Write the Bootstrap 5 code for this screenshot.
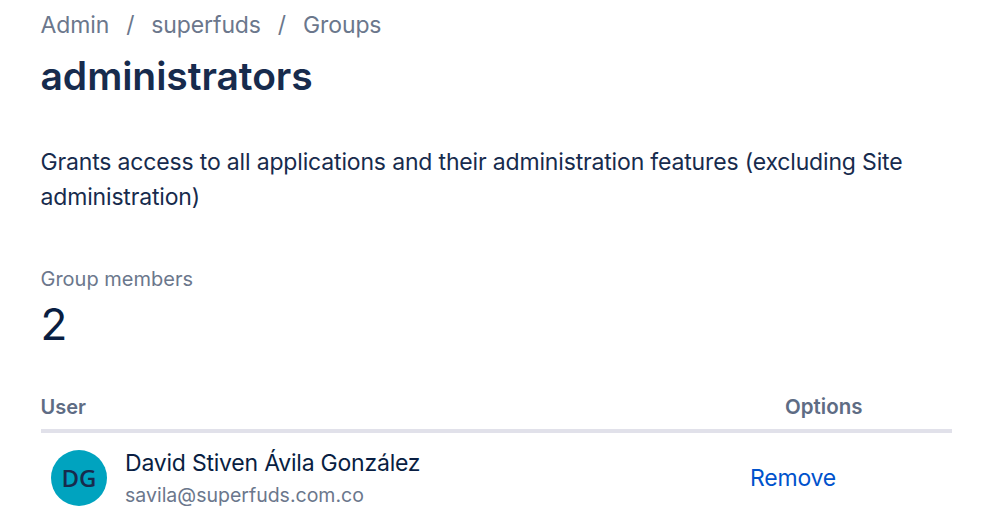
<!DOCTYPE html>
<html lang="en">
<head>
  <meta charset="UTF-8" />
  <meta name="viewport" content="width=device-width, initial-scale=1.0"/>
  <title>administrators</title>
  <link href="https://cdn.jsdelivr.net/npm/bootstrap@5.3.0/dist/css/bootstrap.min.css" rel="stylesheet">
  <style>
    body { font-family: Inter, "Liberation Sans", sans-serif; color: #172b4d; background: #fff; overflow: hidden; }
    .page-wrap { padding: 9px 47px 0 40.5px; }
    .crumbs { font-size: 23px; line-height: 32px; color: #6b778c; gap: 17px; letter-spacing: -.12px; }
    .page-title { font-size: 39px; line-height: 48px; font-weight: 600; color: #172b4d; margin: 11px 0 0; letter-spacing: -.05px; }
    .group-desc { font-size: 23px; line-height: 35px; color: #172b4d; margin: 45px 0 0; letter-spacing: -.165px; }
    .members-label { font-size: 20px; line-height: 28px; color: #6b778c; margin-top: 50px; }
    .members-count { font-size: 44px; line-height: 56px; color: #091e42; margin-top: 3px; }
    .members-head { font-size: 20px; line-height: 28px; font-weight: 600; color: #5e6c84; margin-top: 41px; padding-bottom: 8px; border-bottom: 4px solid #e1e1ea; }
    .col-opts { width: 167px; flex: none; }
    .opts-label { font-size: 20.5px; }
    .member-row { padding: 14px 0 0 10.5px; }
    .avatar-dot { width: 56px; height: 56px; border-radius: 50%; background: #00a3bf; color: #172b4d; font-family: "Open Sans", sans-serif; font-weight: 600; font-size: 24px; }
    .name-block { margin-left: 18px; }
    .member-name { font-size: 23px; line-height: 32px; color: #091e42; letter-spacing: -.22px; }
    .member-mail { font-size: 19.5px; line-height: 28px; color: #6b778c; margin-top: 2px; }
    .remove-link { font-size: 23px; color: #0052cc; text-decoration: none; margin-left: -35px; letter-spacing: -.2px; }
  </style>
</head>
<body>
  <div class="page-wrap">
    <nav class="crumbs d-flex">
      <span>Admin</span><span>/</span><span>superfuds</span><span>/</span><span>Groups</span>
    </nav>
    <h1 class="page-title">administrators</h1>
    <p class="group-desc">Grants access to all applications and their administration features (excluding Site administration)</p>
    <div class="members-label">Group members</div>
    <div class="members-count">2</div>
    <div class="members-head d-flex justify-content-between">
      <span>User</span>
      <span class="col-opts opts-label">Options</span>
    </div>
    <div class="member-row d-flex justify-content-between align-items-center">
      <div class="d-flex align-items-center">
        <div class="avatar-dot d-flex align-items-center justify-content-center">DG</div>
        <div class="name-block">
          <div class="member-name">David Stiven Ávila González</div>
          <div class="member-mail">savila@superfuds.com.co</div>
        </div>
      </div>
      <div class="col-opts"><a href="#" class="remove-link">Remove</a></div>
    </div>
  </div>
</body>
</html>
